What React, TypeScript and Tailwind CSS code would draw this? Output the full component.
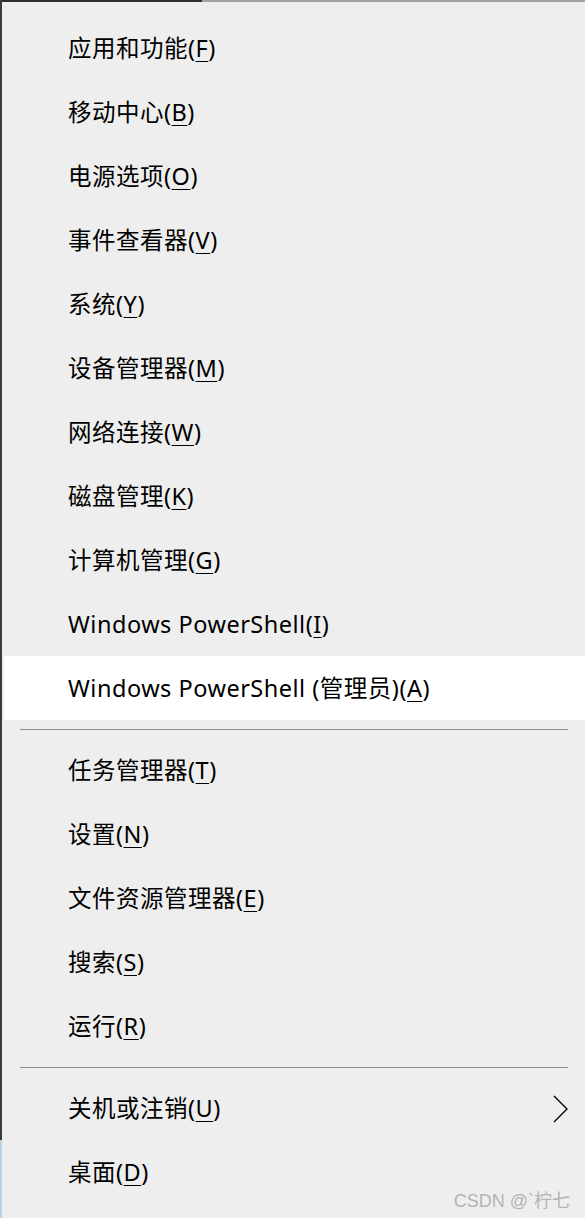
import React from 'react'

interface MenuItem {
    label: string,
    key: string,
    active?: boolean,
    submenu?: boolean,
}

const groups: MenuItem[][] = [
    [
        { label: "应用和功能", key: "F" },
        { label: "移动中心", key: "B" },
        { label: "电源选项", key: "O" },
        { label: "事件查看器", key: "V" },
        { label: "系统", key: "Y" },
        { label: "设备管理器", key: "M" },
        { label: "网络连接", key: "W" },
        { label: "磁盘管理", key: "K" },
        { label: "计算机管理", key: "G" },
        { label: "Windows PowerShell", key: "I" },
        { label: "Windows PowerShell (管理员)", key: "A", active: true },
    ],
    [
        { label: "任务管理器", key: "T" },
        { label: "设置", key: "N" },
        { label: "文件资源管理器", key: "E" },
        { label: "搜索", key: "S" },
        { label: "运行", key: "R" },
    ],
    [
        { label: "关机或注销", key: "U", submenu: true },
        { label: "桌面", key: "D" },
    ],
]

const Row = ({ item }: { item: MenuItem }) => {
    return (
        <div className={`h-[64px] ml-[2px] pl-[64px] pr-[17px] flex items-center justify-between ${item.active ? 'bg-white' : ''}`}>
            <span className="mt-[2px] text-[23.5px] tracking-[0.5px] text-black leading-none whitespace-nowrap">
                {item.label}(<span className="underline underline-offset-[4px] decoration-[1px]">{item.key}</span>)
            </span>
            {item.submenu && (
                <svg width="15" height="28" viewBox="0 0 15 28" className="mt-[2px]">
                    <polyline points="1,1 14,14 1,27" fill="none" stroke="#000" strokeWidth="1.4" />
                </svg>
            )}
        </div>
    )
}

const App = () => {
    return (
        <div
            className="w-[585px] h-[1218px] bg-[#eeeeee] flex relative overflow-hidden"
            style={{ fontFamily: '"Noto Sans", "Noto Sans CJK SC", sans-serif' }}
        >
            {/* left edge */}
            <div className="w-[2px] flex flex-col">
                <div className="h-[1140px] bg-[#3a3a3a]" />
                <div className="flex-1 bg-[#b9d3e6]" />
            </div>

            <div className="flex-1 flex flex-col">
                {/* top edge */}
                <div className="h-[2px] flex">
                    <div className="w-[200px] bg-[#2f2f2f]" />
                    <div className="flex-1 bg-[#a0a0a0]" />
                </div>

                <div className="pt-[14px] flex flex-col">
                    {groups.map((group, gi) => (
                        <div key={gi}>
                            {gi > 0 && (
                                <div className="h-[18px] flex items-center ml-[18px] mr-[17px]">
                                    <div className="h-px w-full bg-[#8f8f8f]" />
                                </div>
                            )}
                            {group.map((item, index) => (
                                <Row key={index} item={item} />
                            ))}
                        </div>
                    ))}
                </div>
            </div>

            {/* watermark */}
            <div
                className="absolute right-[15px] bottom-[8px] text-[18px] text-[#b4b4b4] leading-none"
                style={{ fontFamily: '"Liberation Sans", "Noto Sans CJK SC", sans-serif' }}
            >
                CSDN @`柠七
            </div>
        </div>
    )
}

export default App
